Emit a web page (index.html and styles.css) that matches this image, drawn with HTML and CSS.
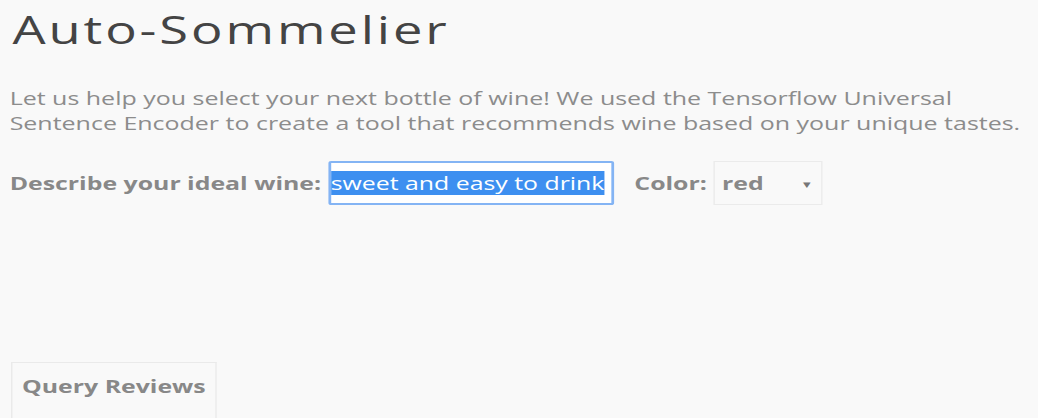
FILE: index.html
```html
<!DOCTYPE html>
<html>
<head>
<meta charset="utf-8">
<link rel="stylesheet" href="styles.css">
</head>
<body>
<main class="page">
  <h1 class="title">Auto-Sommelier</h1>
  <p class="intro">Let us help you select your next bottle of wine! We used the Tensorflow Universal Sentence Encoder to create a tool that recommends wine based on your unique tastes.</p>
  <div class="form-row">
    <label class="label">Describe your ideal wine:</label>
    <div class="text-input"><span class="selected">sweet and easy to drink</span></div>
    <label class="label color-label">Color:</label>
    <div class="select"><span class="select-value">red</span><span class="caret">▾</span></div>
  </div>
  <div class="spacer"></div>
  <button class="query-btn">Query Reviews</button>
</main>
</body>
</html>
```
FILE: styles.css
```css
html, body {
  margin: 0;
  padding: 0;
  background: #f9f9f9;
  overflow: hidden;
  height: 418px;
}
.page {
  width: 752px;
  height: 418px;
  padding: 0 8px 0 7px;
  box-sizing: border-box;
  font-family: "Open Sans", sans-serif;
  display: flex;
  flex-direction: column;
  transform: scaleX(1.38);
  transform-origin: 0 0;
}
.title {
  margin: 7px 0 0 2px;
  font-family: "Open Sans", sans-serif;
  font-weight: 400;
  font-size: 38px;
  line-height: 44px;
  color: #444;
  letter-spacing: 2.1px;
}
.intro {
  margin: 35px 0 0 0;
  font-size: 18.1px;
  line-height: 25px;
  color: #8c8c8c;
}
.form-row {
  display: flex;
  align-items: center;
  margin-top: 25px;
}
.label {
  font-weight: 700;
  font-size: 18px;
  color: #888;
}
.text-input {
  margin-left: 5px;
  width: 207px;
  height: 44px;
  box-sizing: border-box;
  border: 2px solid #84b4f4;
  border-radius: 2px;
  background: #fff;
  display: flex;
  align-items: center;
  padding-left: 0;
  font-size: 18px;
}
.selected {
  background: #3d8ff0;
  color: #fff;
  line-height: 24px;
}
.color-label {
  margin-left: 15px;
}
.select {
  margin-left: 5px;
  width: 79px;
  height: 44px;
  box-sizing: border-box;
  border: 1px solid #ebebeb;
  background: #f9f9f9;
  display: flex;
  align-items: center;
  justify-content: space-between;
  padding: 0 7px 0 5px;
}
.select-value {
  font-weight: 700;
  font-size: 18px;
  color: #888;
}
.caret {
  font-size: 11px;
  color: #777;
}
.spacer {
  flex: 1;
}
.query-btn {
  align-self: flex-start;
  margin: 0 0 0 1px;
  width: 149px;
  height: 56px;
  box-sizing: border-box;
  border: 1px solid #eaeaea;
  border-bottom: none;
  background: #f9f9f9;
  font-family: "Open Sans", sans-serif;
  font-weight: 700;
  font-size: 18px;
  color: #888;
  padding: 0 0 10px 0;
}
```
